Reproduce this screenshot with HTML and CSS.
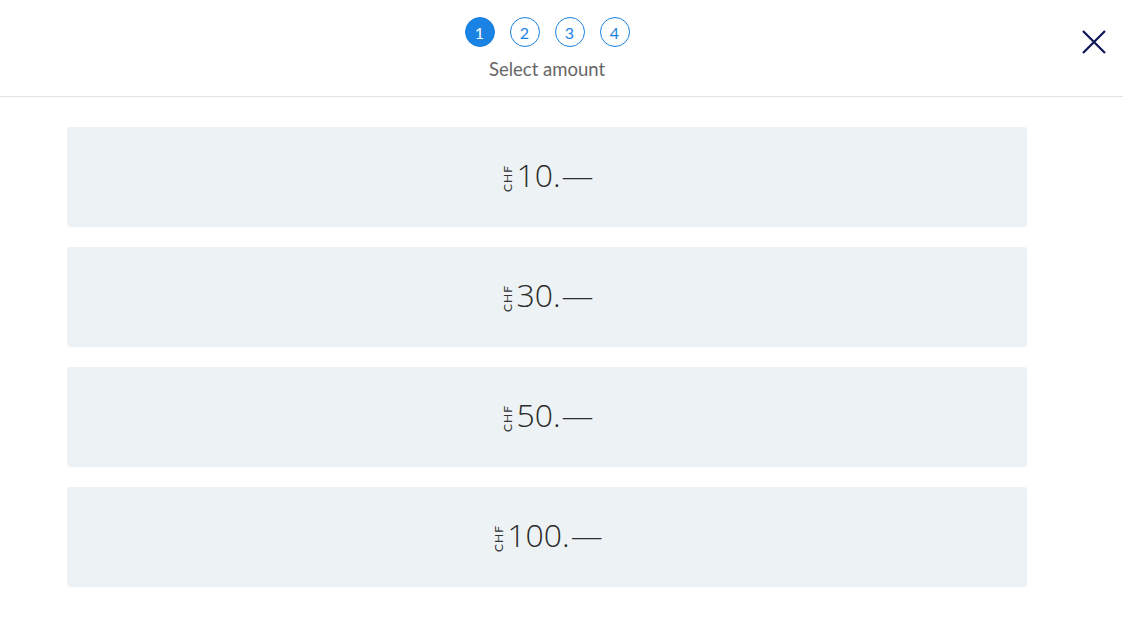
FILE: index.html
```html
<!DOCTYPE html>
<html lang="en">
<head>
  <meta charset="UTF-8">
  <meta name="viewport" content="width=device-width, initial-scale=1.0">
  <title>Select amount</title>
  <link rel="stylesheet" href="styles.css">
</head>
<body>
  <header class="top-bar">
    <div class="top-inner">
      <div class="steps">
        <div class="step-list">
          <span class="step active">1</span>
          <span class="step">2</span>
          <span class="step">3</span>
          <span class="step">4</span>
        </div>
        <div class="step-label">Select amount</div>
      </div>
      <a class="close-btn" aria-label="Close">
        <svg width="26" height="26" viewBox="0 0 26 26">
          <path d="M2 2 L24 24 M24 2 L2 24" stroke="#0c1655" stroke-width="2.2" fill="none"/>
        </svg>
      </a>
    </div>
  </header>

  <main class="page">
    <div class="amounts">
      <button class="amount-card"><span class="currency">CHF</span><span class="value">10.<span class="dash">—</span></span></button>
      <button class="amount-card"><span class="currency">CHF</span><span class="value">30.<span class="dash">—</span></span></button>
      <button class="amount-card"><span class="currency">CHF</span><span class="value">50.<span class="dash">—</span></span></button>
      <button class="amount-card"><span class="currency">CHF</span><span class="value">100.<span class="dash">—</span></span></button>
    </div>
  </main>
</body>
</html>
```

FILE: styles.css
```css
body {
  margin: 0;
  background-color: white;
  font-family: "Lato", "Open Sans", sans-serif;
  color: #333;
}

.top-bar {
  height: 96px;
  border-bottom: 1px solid #dde3e7;
}

.top-inner {
  position: relative;
  width: 1094px;
  height: 100%;
  display: flex;
  justify-content: center;
}

.page {
  width: 1094px;
}

.steps {
  display: flex;
  flex-direction: column;
  align-items: center;
  padding-top: 17px;
}

.step-list {
  display: flex;
  gap: 15px;
}

.step {
  width: 28px;
  height: 28px;
  border: 1px solid #1a82e2;
  border-radius: 50%;
  color: #1a82e2;
  font-size: 16px;
  display: flex;
  justify-content: center;
  align-items: center;
}

.step.active {
  background-color: #1a82e2;
  color: white;
}

.step-label {
  margin-top: 11px;
  font-size: 18.5px;
  color: #666;
}

.close-btn {
  position: absolute;
  right: -13px;
  top: 29px;
  width: 26px;
  height: 26px;
  cursor: pointer;
}

.amounts {
  width: 960px;
  margin: 30px auto 0;
  display: flex;
  flex-direction: column;
  gap: 20px;
}

.amount-card {
  height: 100px;
  border: none;
  border-radius: 3px;
  background-color: #edf2f4;
  display: flex;
  justify-content: center;
  align-items: center;
  cursor: pointer;
  font-family: inherit;
  color: #333;
  padding: 0 0 4px;
}

.currency {
  writing-mode: vertical-rl;
  transform: rotate(180deg);
  font-size: 12px;
  letter-spacing: 1px;
  margin-right: 1px;
  margin-top: 6px;
}

.value {
  font-family: "Open Sans", sans-serif;
  font-size: 32px;
  font-weight: 300;
  line-height: 1;
  color: #2b2b2b;
}

.dash {
  margin-left: 1px;
}
```
